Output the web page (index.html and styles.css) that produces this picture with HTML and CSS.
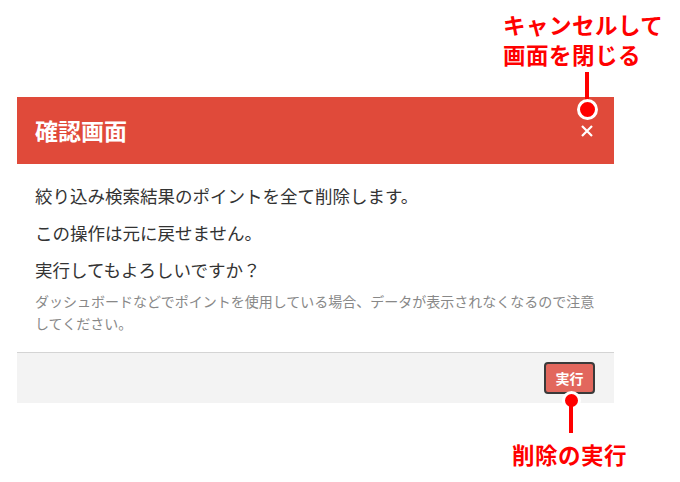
FILE: index.html
```html
<!DOCTYPE html>
<html lang="ja">
<head>
<meta charset="utf-8">
<title>確認画面</title>
<link rel="stylesheet" href="styles.css">
</head>
<body>
<div class="stage">
  <div class="modal">
    <div class="modal-header">
      <h1 class="modal-title">確認画面</h1>
      <span class="close" aria-label="閉じる">
        <svg width="12" height="12" viewBox="0 0 12 12"><path d="M1 1 L11 11 M11 1 L1 11" stroke="#fff" stroke-width="2.2" fill="none"/></svg>
      </span>
    </div>
    <div class="modal-body">
      <div class="msgs">
        <p class="msg">絞り込み検索結果のポイントを全て削除します。</p>
        <p class="msg">この操作は元に戻せません。</p>
        <p class="msg">実行してもよろしいですか？</p>
      </div>
      <p class="note">ダッシュボードなどでポイントを使用している場合、データが表示されなくなるので注意してください。</p>
    </div>
    <div class="modal-footer">
      <button class="btn-exec">実行</button>
    </div>
  </div>

  <div class="callout callout-close">キャンセルして<br>画面を閉じる</div>
  <div class="leader leader-close"></div>
  <div class="dot dot-close"></div>

  <div class="dot dot-exec"></div>
  <div class="leader leader-exec"></div>
  <div class="callout callout-exec">削除の実行</div>
</div>
</body>
</html>
```

FILE: styles.css
```css
* { box-sizing: border-box; }
html, body { margin: 0; padding: 0; background: #fff; }
body {
  font-family: "Noto Sans CJK JP", "Noto Sans", sans-serif;
  color: #333;
}
.stage {
  position: relative;
  width: 680px;
  height: 482px;
  padding-top: 97px;
  padding-left: 17px;
}
.modal {
  width: 597px;
  background: #fff;
}
.modal-header {
  height: 67px;
  background: #e04a3a;
  display: flex;
  align-items: center;
  justify-content: space-between;
  padding: 0 21px 0 18px;
}
.modal-title {
  margin: 0;
  color: #fff;
  font-size: 23px;
  font-weight: 700;
  line-height: 1;
}
.close {
  display: flex;
  width: 12px;
  height: 12px;
  margin-top: 1px;
}
.modal-body {
  padding: 19px 18px 18px 18px;
}
.msgs {
  display: flex;
  flex-direction: column;
  gap: 11px;
}
.msg {
  margin: 0;
  font-size: 17.5px;
  line-height: 26px;
  color: #333;
}
.note {
  margin: 7px 0 0 0;
  font-size: 14px;
  line-height: 22px;
  color: #888;
}
.modal-footer {
  border-top: 1px solid #d4d4d4;
  background: #f3f3f3;
  height: 51px;
  display: flex;
  justify-content: flex-end;
  align-items: flex-start;
  padding: 9px 19px 0 0;
}
.btn-exec {
  width: 51px;
  height: 32px;
  background: #e2675d;
  border: 2px solid #3a3a3a;
  border-radius: 4px;
  color: #fff;
  font-family: inherit;
  font-size: 14px;
  font-weight: 700;
  padding: 0;
}

/* annotations */
.callout {
  position: absolute;
  color: #ff0000;
  font-size: 22.5px;
  font-weight: 700;
  line-height: 30px;
  letter-spacing: 0.5px;
  white-space: nowrap;
}
.callout-close { left: 503px; top: 9px; }
.callout-exec { left: 512px; top: 439px; }
.leader {
  position: absolute;
  width: 4px;
  background: #ff0000;
}
.leader-close { left: 585px; top: 72px; height: 30px; }
.leader-exec { left: 569px; top: 405px; height: 28px; }
.dot {
  position: absolute;
  border-radius: 50%;
  background: #ff0000;
  border: 3px solid #fff;
}
.dot-close { left: 577px; top: 99px; width: 21px; height: 21px; }
.dot-exec { left: 562px; top: 391px; width: 19px; height: 19px; }
```
